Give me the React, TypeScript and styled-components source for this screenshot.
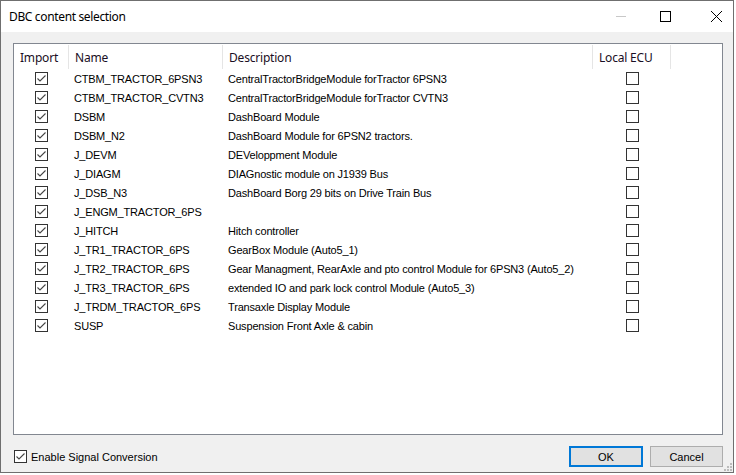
import React from "react";
import styled, { createGlobalStyle } from "styled-components";

const Global = createGlobalStyle`
  html, body { margin: 0; padding: 0; background: #ffffff; }
  body { font-family: "Liberation Sans", Arial, sans-serif; }
  * { box-sizing: border-box; }
`;

const rows: { name: string; desc: string }[] = [
  { name: "CTBM_TRACTOR_6PSN3", desc: "CentralTractorBridgeModule forTractor 6PSN3" },
  { name: "CTBM_TRACTOR_CVTN3", desc: "CentralTractorBridgeModule forTractor CVTN3" },
  { name: "DSBM", desc: "DashBoard Module" },
  { name: "DSBM_N2", desc: "DashBoard Module for 6PSN2 tractors." },
  { name: "J_DEVM", desc: "DEVeloppment Module" },
  { name: "J_DIAGM", desc: "DIAGnostic module on J1939 Bus" },
  { name: "J_DSB_N3", desc: "DashBoard Borg 29 bits on Drive Train Bus" },
  { name: "J_ENGM_TRACTOR_6PS", desc: "" },
  { name: "J_HITCH", desc: "Hitch controller" },
  { name: "J_TR1_TRACTOR_6PS", desc: "GearBox Module (Auto5_1)" },
  { name: "J_TR2_TRACTOR_6PS", desc: "Gear Managment, RearAxle and pto control Module for 6PSN3 (Auto5_2)" },
  { name: "J_TR3_TRACTOR_6PS", desc: "extended IO and park lock control Module (Auto5_3)" },
  { name: "J_TRDM_TRACTOR_6PS", desc: "Transaxle Display Module" },
  { name: "SUSP", desc: "Suspension Front Axle & cabin" },
];

const COLS = "55px 154px 370px 78px 1fr";

const Window = styled.div`
  width: 734px;
  height: 473px;
  border: 1px solid #6f6f6f;
  background: #f0f0f0;
  display: flex;
  flex-direction: column;
  position: relative;
`;

const TitleBar = styled.div`
  height: 31px;
  background: #ffffff;
  display: flex;
  align-items: center;
  padding-left: 8px;
  flex-shrink: 0;
`;

const Title = styled.div`
  flex: 1;
  font-family: "Noto Sans", "Segoe UI", sans-serif;
  font-size: 12px;
  letter-spacing: -0.35px;
  color: #000;
  margin-top: -1px;
`;

const Ctrl = styled.div<{ $w: number; $ml?: number }>`
  width: ${(p) => p.$w}px;
  margin-left: ${(p) => p.$ml ?? 0}px;
  height: 31px;
  display: flex;
  align-items: center;
  justify-content: center;
`;

const Body = styled.div`
  flex: 1;
  display: flex;
  flex-direction: column;
  padding: 11px 10px 0 12px;
`;

const ListBox = styled.div`
  height: 392px;
  border: 1px solid #828790;
  background: #ffffff;
  display: flex;
  flex-direction: column;
`;

const HeaderRow = styled.div`
  display: grid;
  grid-template-columns: ${COLS};
  height: 25px;
`;

const HeaderCell = styled.div<{ $sep?: boolean }>`
  font-family: "Noto Sans", "Segoe UI", sans-serif;
  font-size: 12px;
  letter-spacing: -0.2px;
  color: #1a0e24;
  display: flex;
  align-items: center;
  padding-left: 6px;
  margin: 1px 0 0 0;
  border-right: ${(p) => (p.$sep ? "1px solid #e5e5e5" : "none")};
`;

const Row = styled.div`
  display: grid;
  grid-template-columns: ${COLS};
  height: 19px;
  align-items: center;
`;

const CheckCell = styled.div`
  display: flex;
  justify-content: center;
  align-items: center;
`;

const TextCell = styled.div`
  font-family: "Liberation Sans", Arial, sans-serif;
  font-size: 11px;
  letter-spacing: -0.17px;
  color: #000;
  padding-left: 5px;
  white-space: nowrap;
  overflow: hidden;
`;

const Box = styled.div`
  width: 13px;
  height: 13px;
  border: 1px solid #333333;
  background: #ffffff;
  display: flex;
  align-items: center;
  justify-content: center;
`;

const Footer = styled.div`
  display: flex;
  align-items: center;
  padding-top: 11px;
  gap: 7px;
`;

const FooterCheck = styled.label`
  flex: 1;
  display: flex;
  align-items: center;
  gap: 4px;
  font-family: "Liberation Sans", Arial, sans-serif;
  font-size: 11px;
  color: #000;
  padding-left: 1px;
`;

const Button = styled.div<{ $default?: boolean }>`
  width: ${(p) => (p.$default ? 74 : 73)}px;
  height: 21px;
  background: #e1e1e1;
  border: ${(p) => (p.$default ? "2px solid #0078d7" : "1px solid #adadad")};
  display: flex;
  align-items: center;
  justify-content: center;
  font-family: "Liberation Sans", Arial, sans-serif;
  font-size: 11px;
  color: #000;
`;

const Grip = styled.svg`
  position: absolute;
  right: 1px;
  bottom: 1px;
`;

const Check = ({ on }: { on: boolean }) => (
  <Box>
    {on && (
      <svg width="11" height="11" viewBox="0 0 11 11">
        <polyline points="1.5,5.5 4,8 9.5,2.5" fill="none" stroke="#444" strokeWidth="1.1" />
      </svg>
    )}
  </Box>
);

export default function App() {
  return (
    <>
      <Global />
      <Window>
        <TitleBar>
          <Title>DBC content selection</Title>
          <Ctrl $w={44}>
            <svg width="10" height="1"><line x1="0" y1="0.5" x2="10" y2="0.5" stroke="#c8c8c8" /></svg>
          </Ctrl>
          <Ctrl $w={44}>
            <svg width="11" height="11"><rect x="0.5" y="0.5" width="10" height="10" fill="none" stroke="#000" /></svg>
          </Ctrl>
          <Ctrl $w={34} $ml={12}>
            <svg width="11" height="11"><path d="M0 0 L11 11 M11 0 L0 11" stroke="#000" strokeWidth="1" /></svg>
          </Ctrl>
        </TitleBar>
        <Body>
          <ListBox>
            <HeaderRow>
              <HeaderCell $sep>Import</HeaderCell>
              <HeaderCell $sep>Name</HeaderCell>
              <HeaderCell $sep>Description</HeaderCell>
              <HeaderCell $sep>Local ECU</HeaderCell>
              <HeaderCell />
            </HeaderRow>
            {rows.map((r) => (
              <Row key={r.name}>
                <CheckCell><Check on /></CheckCell>
                <TextCell>{r.name}</TextCell>
                <TextCell>{r.desc}</TextCell>
                <CheckCell><Check on={false} /></CheckCell>
                <div />
              </Row>
            ))}
          </ListBox>
          <Footer>
            <FooterCheck>
              <Check on />
              Enable Signal Conversion
            </FooterCheck>
            <Button $default>OK</Button>
            <Button>Cancel</Button>
          </Footer>
        </Body>
        <Grip width="10" height="10" viewBox="0 0 10 10">
          {[[8, 2], [8, 5], [5, 5], [8, 8], [5, 8], [2, 8]].map(([x, y]) => (
            <rect key={`${x}-${y}`} x={x} y={y} width="2" height="2" fill="#bcbcbc" />
          ))}
        </Grip>
      </Window>
    </>
  );
}
